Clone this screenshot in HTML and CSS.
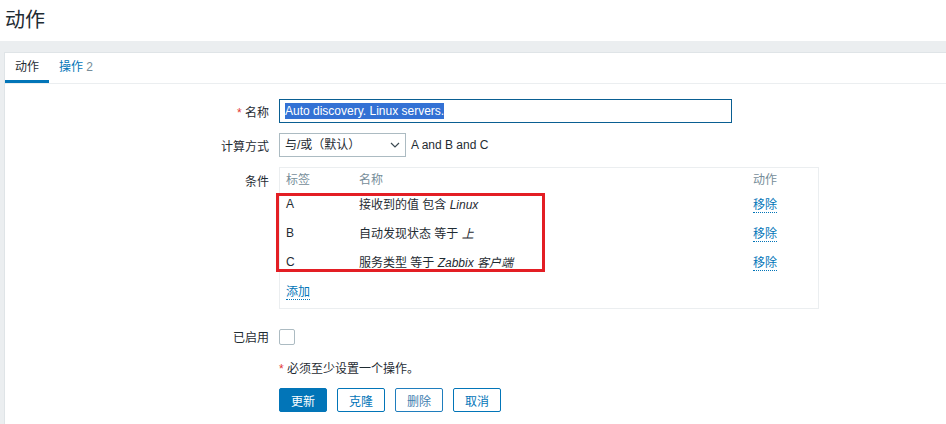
FILE: index.html
```html
<!DOCTYPE html>
<html>
<head>
    <title>动作</title>
    <link rel="stylesheet" href="styles.css">
</head>
<body>
    <div class="header">
        <h1>动作</h1>
    </div>
    <div class="wrapper">
        <div class="panel">
            <div class="tabs">
                <span class="tab active">动作</span>
                <span class="tab">操作 <span class="count">2</span></span>
            </div>
            <div class="form">
                <div class="row">
                    <label class="label"><span class="req">*</span> 名称</label>
                    <div class="field">
                        <div class="text-input"><span class="selected">Auto discovery. Linux servers.</span></div>
                    </div>
                </div>
                <div class="row">
                    <label class="label">计算方式</label>
                    <div class="field inline">
                        <div class="select">与/或（默认）
                            <svg class="chevron" width="10" height="6" viewBox="0 0 10 6"><path d="M1 1l4 4 4-4" fill="none" stroke="#3c4a52" stroke-width="1.2"/></svg>
                        </div>
                        <span class="formula">A and B and C</span>
                    </div>
                </div>
                <div class="row top">
                    <label class="label">条件</label>
                    <div class="field">
                        <div class="conditions">
                            <table>
                                <tr class="head">
                                    <th class="c-label">标签</th>
                                    <th class="c-name">名称</th>
                                    <th class="c-action">动作</th>
                                </tr>
                                <tr>
                                    <td>A</td>
                                    <td>接收到的值 包含 <i>Linux</i></td>
                                    <td><a class="link">移除</a></td>
                                </tr>
                                <tr>
                                    <td>B</td>
                                    <td>自动发现状态 等于 <i>上</i></td>
                                    <td><a class="link">移除</a></td>
                                </tr>
                                <tr>
                                    <td>C</td>
                                    <td>服务类型 等于 <i>Zabbix 客户端</i></td>
                                    <td><a class="link">移除</a></td>
                                </tr>
                                <tr>
                                    <td colspan="3"><a class="link">添加</a></td>
                                </tr>
                            </table>
                            <div class="highlight"></div>
                        </div>
                    </div>
                </div>
                <div class="row enabled">
                    <label class="label">已启用</label>
                    <div class="field">
                        <span class="checkbox"></span>
                    </div>
                </div>
                <div class="row note">
                    <div class="label"></div>
                    <div class="field"><span class="req">*</span> 必须至少设置一个操作。</div>
                </div>
                <div class="row">
                    <div class="label"></div>
                    <div class="field buttons">
                        <button class="btn primary">更新</button>
                        <button class="btn">克隆</button>
                        <button class="btn muted">删除</button>
                        <button class="btn">取消</button>
                    </div>
                </div>
            </div>
        </div>
    </div>
</body>
</html>
```

FILE: styles.css
```css
body {
    margin: 0;
    font-family: "Liberation Sans", Arial, "Noto Sans CJK SC", sans-serif;
    font-size: 12px;
    color: #1f2c33;
    background-color: #ebeef0;
    height: 424px;
    overflow: hidden;
}

.header {
    background-color: #ffffff;
    height: 41px;
    padding-left: 5px;
    display: flex;
    align-items: center;
}

.header h1 {
    margin: 0;
    font-size: 20px;
    font-weight: normal;
    margin-top: -4px;
}

.wrapper {
    padding: 11px 0 0 4px;
}

.panel {
    background-color: #ffffff;
    border: 1px solid #dfe4e7;
    border-right: none;
    height: 380px;
}

.tabs {
    display: flex;
    height: 30px;
    border-bottom: 1px solid #ebeef0;
}

.tab {
    padding: 0 10px;
    line-height: 28px;
    color: #0275b8;
    border-bottom: 3px solid transparent;
}

.tab .count {
    color: #768d99;
}

.tab.active {
    color: #1f2c33;
    border-bottom-color: #0275b8;
}

.form {
    padding-top: 15px;
}

.row {
    display: flex;
    align-items: center;
    margin-bottom: 10px;
}

.row.top {
    align-items: flex-start;
}

.label {
    width: 264px;
    flex: none;
    text-align: right;
    padding-right: 10px;
}

.row.top .label {
    padding-top: 5px;
}

.req {
    color: #e33734;
}

.field.inline {
    display: flex;
    align-items: center;
}

.text-input {
    width: 441px;
    height: 22px;
    border: 1px solid #0a5f92;
    padding: 0 5px;
    line-height: 22px;
    font-size: 12px;
}

.selected {
    background-color: #3371d4;
    color: #ffffff;
    padding: 1px 0;
}

.select {
    width: 115px;
    height: 22px;
    border: 1px solid #acbbc2;
    padding: 0 5px;
    line-height: 22px;
    position: relative;
}

.chevron {
    position: absolute;
    right: 5px;
    top: 8px;
}

.formula {
    margin-left: 5px;
}

.conditions {
    position: relative;
    width: 538px;
    border: 1px solid #ebeef0;
    padding: 0 0 3px 0;
}

table {
    width: 100%;
    border-collapse: collapse;
}

th {
    font-weight: normal;
    color: #768d99;
    text-align: left;
    height: 21px;
    padding: 0 0 0 6px;
}

td {
    height: 29px;
    padding: 0 0 0 6px;
}

.c-label {
    width: 67px;
}

.c-action {
    width: 60px;
    padding-right: 5px;
}

.link {
    color: #0275b8;
    border-bottom: 1px dotted #0275b8;
    cursor: pointer;
}

.highlight {
    position: absolute;
    left: -4px;
    top: 25px;
    width: 263px;
    height: 73px;
    border: 3px solid #e31e24;
}

.row.enabled {
    margin-top: 19px;
    margin-bottom: 14px;
}

.checkbox {
    display: block;
    width: 14px;
    height: 14px;
    border: 1px solid #acbbc2;
    border-radius: 2px;
}

.row.note {
    margin-bottom: 12px;
}

.buttons {
    display: flex;
    gap: 10px;
}

.btn {
    width: 48px;
    height: 24px;
    font-family: inherit;
    font-size: 12px;
    background-color: #ffffff;
    color: #0275b8;
    border: 1px solid #0275b8;
    border-radius: 2px;
    padding: 0;
}

.btn.primary {
    background-color: #0275b8;
    color: #ffffff;
}

.btn.muted {
    color: #3f80b0;
    border-color: #1f7dbd;
}
```
